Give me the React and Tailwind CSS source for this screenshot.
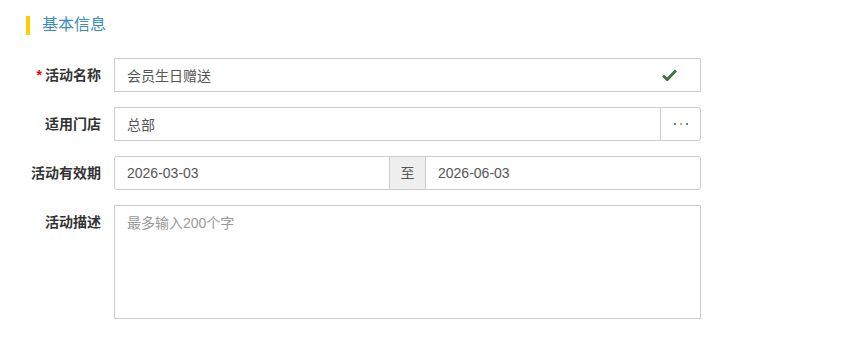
import React from 'react';

const font = { fontFamily: '"Liberation Sans", "Noto Sans CJK SC", sans-serif' };

const Label = ({ children, required }) => (
  <label className="w-[101px] shrink-0 text-right text-[14px] font-bold leading-[34px] text-[#333]">
    {required && <span className="mr-[3px] text-[#e00]">*</span>}
    {children}
  </label>
);

const inputCls = 'h-[34px] border border-[#ccc] bg-white px-[12px] text-[14px] text-[#555] outline-none';

export default function App() {
  return (
    <div className="h-[338px] w-[862px] bg-white pt-[15px]" style={font}>
      <div className="ml-[26px] flex items-center">
        <span className="h-[19px] w-[4px] bg-[#ffcc00]" />
        <span className="ml-[12px] text-[16px] leading-[20px] text-[#3c8dbc]">基本信息</span>
      </div>

      <div className="mt-[23px] flex flex-col gap-[15px]">
        <div className="flex items-start gap-[13px]">
          <Label required>活动名称</Label>
          <div className="relative w-[587px]">
            <input readOnly value="会员生日赠送" className={`${inputCls} w-full border-[#3c763d]`} />
            <svg className="absolute right-[24px] top-[11px]" width="15" height="12" viewBox="0 0 15 12">
              <path d="M1 6.5 L5.2 10.5 L14 1.5" fill="none" stroke="#3c763d" strokeWidth="3" />
            </svg>
          </div>
        </div>

        <div className="flex items-start gap-[13px]">
          <Label>适用门店</Label>
          <div className="flex w-[587px]">
            <input readOnly value="总部" className={`${inputCls} min-w-0 flex-1`} />
            <button className="flex h-[34px] w-[40px] items-center justify-center gap-[4px] rounded-r-[4px] border border-l-0 border-[#ccc] bg-white">
              <span className="h-[2px] w-[2px] bg-[#3c8dbc]" />
              <span className="h-[2px] w-[2px] bg-[#e8a33c]" />
              <span className="h-[2px] w-[2px] bg-[#3c8dbc]" />
            </button>
          </div>
        </div>

        <div className="flex items-start gap-[13px]">
          <Label>活动有效期</Label>
          <div className="flex w-[587px]">
            <input readOnly value="2026-03-03" className={`${inputCls} min-w-0 flex-1 rounded-l-[3px]`} />
            <span className="flex h-[34px] w-[35px] items-center justify-center border-y border-[#ccc] bg-[#eee] text-[14px] text-[#555]">至</span>
            <input readOnly value="2026-06-03" className={`${inputCls} min-w-0 flex-1 rounded-r-[3px]`} />
          </div>
        </div>

        <div className="flex items-start gap-[13px]">
          <Label>活动描述</Label>
          <textarea
            placeholder="最多输入200个字"
            className="h-[114px] w-[587px] resize-none border border-[#ccc] px-[12px] py-[7px] text-[14px] text-[#555] outline-none placeholder:text-[#999]"
          />
        </div>
      </div>
    </div>
  );
}
